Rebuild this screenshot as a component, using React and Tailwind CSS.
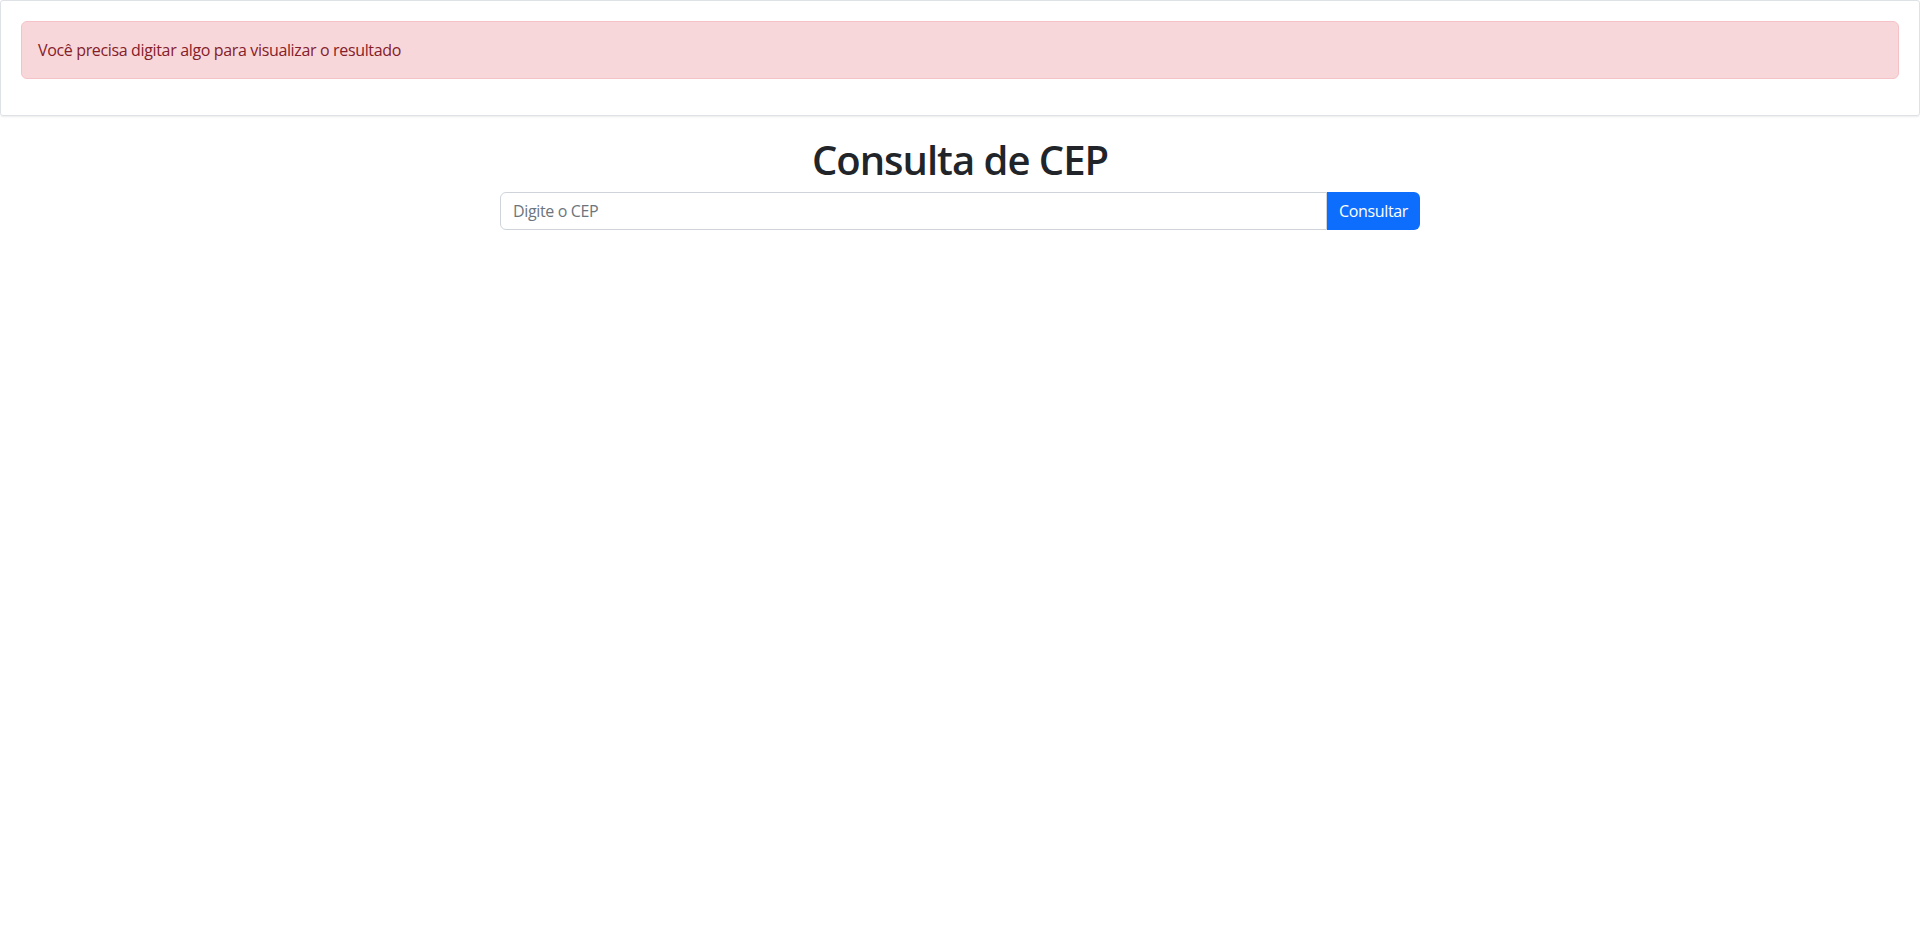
const App = () => {
  return (
    <div className="min-h-screen bg-white text-[#212529] font-['Segoe_UI','Open_Sans',sans-serif] tracking-[-0.35px]">
      {/* Alert card */}
      <div className="p-5 border border-[#dee2e6] rounded-[3px] shadow-[0_1px_2px_rgba(0,0,0,0.08)]">
        <div className="mb-4 px-4 py-4 bg-[#f8d7da] border border-[#f5c2c7] text-[#842029] rounded-md text-base leading-6">
          Você precisa digitar algo para visualizar o resultado
        </div>
      </div>

      {/* Search */}
      <div className="mt-5 flex flex-col items-center">
        <h1 className="text-[40px] leading-[48px] font-semibold tracking-[-1px] mb-2">Consulta de CEP</h1>
        <div className="flex w-[920px]">
          <input
            type="text"
            placeholder="Digite o CEP"
            className="flex-1 min-w-0 h-[38px] px-3 py-1.5 text-base leading-6 border border-[#ced4da] rounded-l-md placeholder:text-[#6c757d] outline-none"
          />
          <button className="w-[93px] h-[38px] text-base leading-6 text-white bg-[#0d6efd] rounded-r-md">
            Consultar
          </button>
        </div>
      </div>
    </div>
  );
};

export default App;
